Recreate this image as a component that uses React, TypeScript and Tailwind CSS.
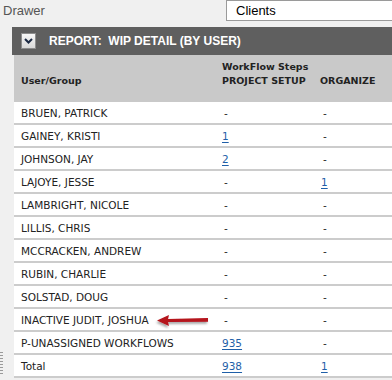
import React from "react";

type Cell = string | { link: string };
const rows: [string, Cell, Cell][] = [
  ["BRUEN, PATRICK", "-", "-"],
  ["GAINEY, KRISTI", { link: "1" }, "-"],
  ["JOHNSON, JAY", { link: "2" }, "-"],
  ["LAJOYE, JESSE", "-", { link: "1" }],
  ["LAMBRIGHT, NICOLE", "-", "-"],
  ["LILLIS, CHRIS", "-", "-"],
  ["MCCRACKEN, ANDREW", "-", "-"],
  ["RUBIN, CHARLIE", "-", "-"],
  ["SOLSTAD, DOUG", "-", "-"],
  ["INACTIVE JUDIT, JOSHUA", "-", "-"],
  ["P-UNASSIGNED WORKFLOWS", { link: "935" }, "-"],
  ["Total", { link: "938" }, { link: "1" }],
];

function CellView({ c }: { c: Cell }) {
  if (typeof c === "string") return <span className="pl-[2px]">{c}</span>;
  return <a className="text-[#1f5fa8] underline underline-offset-2 cursor-pointer">{c.link}</a>;
}

export default function App() {
  return (
    <div className="w-[392px] h-[380px] overflow-hidden bg-[#f0f0f0] relative" style={{ fontFamily: "'Liberation Sans', Arial, sans-serif" }}>
      {/* top row */}
      <div className="flex h-[22px]">
        <div className="w-[226px] pl-[3px] pt-[1px] text-[13px] text-[#555]">Drawer</div>
        <div className="flex-1 h-[21px] border border-[#9a9a9a] bg-white pl-[9px] text-[13px] text-black leading-[19px] mr-[-4px]">Clients</div>
      </div>
      {/* report bar */}
      <div className="mt-[5px] ml-[12px] h-[28px] bg-[#5f5f5f] flex items-center">
        <div className="ml-[9px] w-[15px] h-[16px] border border-[#8d8d8d] bg-gradient-to-b from-[#f7f7f7] to-[#d9d9d9] flex items-center justify-center">
          <svg width="9" height="6" viewBox="0 0 9 6">
            <path d="M1 1 L4.5 4.5 L8 1" stroke="#1c2a44" strokeWidth="2" fill="none" />
          </svg>
        </div>
        <div className="ml-[13px] text-[12px] font-bold text-white whitespace-pre">REPORT:  WIP DETAIL (BY USER)</div>
      </div>
      {/* table */}
      <div className="ml-[14px] text-[#222]" style={{ fontFamily: "'DejaVu Sans', Verdana, sans-serif" }}>
        <div className="grid grid-cols-[201px_99px_1fr] h-[47px] bg-[#c9c9c9] text-[9.5px] font-bold text-[#222]">
          <div className="pl-[7px] flex items-center pt-[6px]">User/Group</div>
          <div className="col-span-2 pl-[7px] pt-[5px] flex flex-col">
            <div className="leading-[14px]">WorkFlow Steps</div>
            <div className="grid grid-cols-[99px_1fr] leading-[13px]">
              <div>PROJECT SETUP</div>
              <div className="-ml-[1px]">ORGANIZE</div>
            </div>
          </div>
        </div>
        {rows.map((r, i) => (
          <div key={i} className="grid grid-cols-[201px_99px_1fr] h-[23px] pt-[2px] bg-white border-b-2 border-[#cccccc] text-[10.5px] items-center">
            <div className="pl-[7px] whitespace-nowrap">{r[0]}</div>
            <div className="pl-[7px]"><CellView c={r[1]} /></div>
            <div className="pl-[7px]"><CellView c={r[2]} /></div>
          </div>
        ))}
      </div>
      {/* left dotted handle */}
      <div className="absolute left-[0px] top-[352px] flex flex-col gap-[2px]">
        {Array.from({ length: 8 }).map((_, i) => (
          <div key={i} className="w-[3px] h-[1px] bg-[#9a9a9a]" />
        ))}
      </div>
      {/* red arrow */}
      <svg className="absolute left-[154px] top-[311px]" width="60" height="20" viewBox="0 0 60 20">
        <defs>
          <filter id="sh" x="-20%" y="-50%" width="140%" height="200%">
            <feDropShadow dx="-1" dy="2" stdDeviation="1.2" floodColor="#000" floodOpacity="0.35" />
          </filter>
        </defs>
        <g filter="url(#sh)">
          <path d="M3 9.5 L15 4 L14 8 L54 7 L54 10.8 L14 11 L15 15 Z" fill="#b5121b" />
        </g>
      </svg>
    </div>
  );
}
